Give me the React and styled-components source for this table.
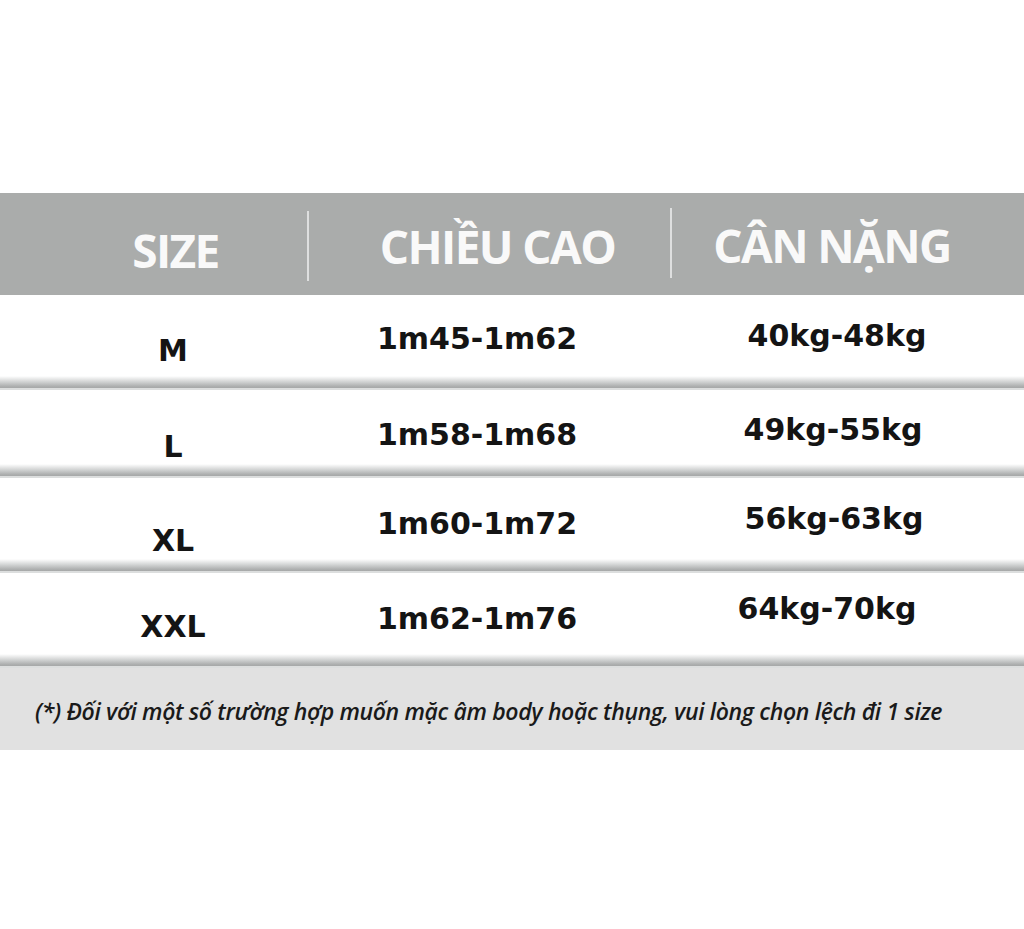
import React from 'react';
import styled, { createGlobalStyle } from 'styled-components';

const GlobalStyle = createGlobalStyle`
  body {
    margin: 0;
    background: #ffffff;
    font-family: 'DejaVu Sans', 'Liberation Sans', sans-serif;
  }
`;

const Page = styled.div`
  width: 1024px;
  height: 929px;
  padding-top: 193px;
  box-sizing: border-box;
  background: #ffffff;
`;

const HeaderBar = styled.div`
  display: grid;
  grid-template-columns: 307px 2px 361px 2px 1fr;
  align-items: center;
  height: 102px;
  background: #aaacab;
`;

const HeaderCell = styled.div`
  padding: ${(p) => p.$pad || '0'};
  text-align: center;
  font-family: 'Open Sans', 'Liberation Sans', sans-serif;
  font-weight: 700;
  font-size: 46px;
  letter-spacing: -1.6px;
  color: #f9f9f9;
  transform: translateY(${(p) => p.$dy || 0}px);
`;

const Divider = styled.div`
  width: 2px;
  height: 70px;
  background: #dedfdf;
  transform: translateY(${(p) => p.$dy || 0}px);
`;

const Row = styled.div`
  display: flex;
  flex-direction: column;
`;

const RowBody = styled.div`
  display: grid;
  grid-template-columns: 346px 262px 1fr;
  align-items: center;
  height: ${(p) => p.$h}px;
  background: #ffffff;
`;

const Cell = styled.div`
  padding: ${(p) => p.$pad || '0'};
  text-align: center;
  font-family: 'DejaVu Sans', 'Liberation Sans', sans-serif;
  font-weight: 700;
  font-size: 30px;
  color: #141414;
  white-space: nowrap;
`;

const CellText = styled.span`
  display: inline-block;
  transform: translate(${(p) => p.$dx || 0}px, ${(p) => p.$dy || 0}px);
`;

const Separator = styled.div`
  height: 12px;
  background: linear-gradient(
    to bottom,
    #ffffff 0%,
    #d4d6d6 45%,
    #aeb0b0 85%,
    #a6a8a8 100%
  );
  border-bottom: 2px solid #dcdede;
`;

const Note = styled.div`
  display: flex;
  align-items: center;
  height: 82px;
  padding: 3px 0 0 35px;
  box-sizing: border-box;
  background: #e1e1e1;
  font-family: 'Open Sans', 'Liberation Sans', sans-serif;
  font-style: italic;
  font-weight: 600;
  font-size: 23px;
  letter-spacing: -0.35px;
  color: #1a1a1a;
  white-space: nowrap;
`;

const rows = [
  { size: 'M', height: '1m45-1m62', weight: '40kg-48kg', h: 81, dy: [15, 3, 0], wdx: 6 },
  { size: 'L', height: '1m58-1m68', weight: '49kg-55kg', h: 74, dy: [19, 7, 2], wdx: 2 },
  { size: 'XL', height: '1m60-1m72', weight: '56kg-63kg', h: 81, dy: [22, 5, 0], wdx: 3 },
  { size: 'XXL', height: '1m62-1m76', weight: '64kg-70kg', h: 81, dy: [13, 5, -5], wdx: -4 },
];

const App = () => (
  <>
    <GlobalStyle />
    <Page>
      <HeaderBar>
        <HeaderCell $pad="0 0 0 44px" $dy={6}>SIZE</HeaderCell>
        <Divider $dy={2} />
        <HeaderCell $pad="0 0 0 16px" $dy={2}>CHIỀU CAO</HeaderCell>
        <Divider $dy={-1} />
        <HeaderCell $pad="0 32px 0 0" $dy={1}>CÂN NẶNG</HeaderCell>
      </HeaderBar>
      {rows.map((r) => (
        <Row key={r.size}>
          <RowBody $h={r.h}>
            <Cell>
              <CellText $dy={r.dy[0]}>{r.size}</CellText>
            </Cell>
            <Cell>
              <CellText $dy={r.dy[1]}>{r.height}</CellText>
            </Cell>
            <Cell $pad="0 0 0 30px">
              <CellText $dx={r.wdx} $dy={r.dy[2]}>{r.weight}</CellText>
            </Cell>
          </RowBody>
          <Separator />
        </Row>
      ))}
      <Note>
        (*) Đối với một số trường hợp muốn mặc âm body hoặc thụng, vui lòng chọn lệch đi 1 size
      </Note>
    </Page>
  </>
);

export default App;
